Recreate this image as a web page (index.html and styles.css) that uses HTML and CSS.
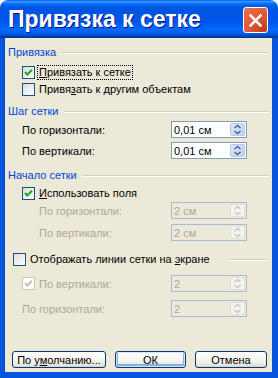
FILE: index.html
```html
<!DOCTYPE html>
<html lang="ru">
<head>
  <meta charset="UTF-8">
  <title>Привязка к сетке</title>
  <link rel="stylesheet" href="styles.css">
</head>
<body>

<div class="window">

  <div class="titlebar">
    <span class="title">Привязка к сетке</span>
    <span class="close">
      <svg width="13" height="13" viewBox="0 0 13 13"><path d="M1.5 1.5 L11.5 11.5 M11.5 1.5 L1.5 11.5" stroke="#fff" stroke-width="2.6" stroke-linecap="square"/></svg>
    </span>
  </div>

  <div class="frame">

    <div class="legend r1"><span>Привязка</span><i class="rule"></i></div>

    <div class="row ind1 r2">
      <span class="cb"><svg width="11" height="11" viewBox="0 0 11 11"><path d="M2 5 L4.3 7.5 L9 2.8" fill="none" stroke="#21a121" stroke-width="2"/></svg></span>
      <span class="lbl focus"><u>П</u>ривязать к сетке</span>
    </div>
    <div class="row ind1 r3">
      <span class="cb"></span>
      <span class="lbl">Привя<u>з</u>ать к другим объектам</span>
    </div>

    <div class="legend r4"><span>Шаг сетки</span><i class="rule"></i></div>

    <div class="row ind1 r5">
      <span class="name">По горизонтали:</span>
      <span class="spin"><span class="val">0,01 см</span><span class="arrows"></span></span>
    </div>
    <div class="row ind1 r6">
      <span class="name">По вертикали:</span>
      <span class="spin"><span class="val">0,01 см</span><span class="arrows"></span></span>
    </div>

    <div class="legend r7"><span>Начало сетки</span><i class="rule"></i></div>

    <div class="row ind1 r8">
      <span class="cb"><svg width="11" height="11" viewBox="0 0 11 11"><path d="M2 5 L4.3 7.5 L9 2.8" fill="none" stroke="#21a121" stroke-width="2"/></svg></span>
      <span class="lbl"><u>И</u>спользовать поля</span>
    </div>
    <div class="row ind2 off r9">
      <span class="name">По горизонтали:</span>
      <span class="spin"><span class="val">2 см</span><span class="arrows"></span></span>
    </div>
    <div class="row ind2 off r10">
      <span class="name">По вертикали:</span>
      <span class="spin"><span class="val">2 см</span><span class="arrows"></span></span>
    </div>

    <div class="row ind0 r11">
      <span class="cb"></span>
      <span class="lbl">Отображать линии сетки на <u>э</u>кране</span>
      <i class="rule wide"></i>
    </div>
    <div class="row ind1 off r12">
      <span class="cb"><svg width="11" height="11" viewBox="0 0 11 11"><path d="M2 5 L4.3 7.5 L9 2.8" fill="none" stroke="#c4c2b6" stroke-width="2"/></svg></span>
      <span class="name">По вертикали:</span>
      <span class="spin"><span class="val">2</span><span class="arrows"></span></span>
    </div>
    <div class="row ind1 off r13">
      <span class="name">По горизонтали:</span>
      <span class="spin"><span class="val">2</span><span class="arrows"></span></span>
    </div>

    <div class="buttons">
      <button class="btn wide">По у<u>м</u>олчанию...</button>
      <button class="btn default">ОК</button>
      <button class="btn">Отмена</button>
    </div>

  </div>

</div>

</body>
</html>
```

FILE: styles.css
```css
body {
  margin: 0;
  background: #fff;
  font-family: 'Liberation Sans', Arial, sans-serif;
  font-size: 11px;
  color: #000;
}

.window {
  width: 278px;
  height: 378px;
  display: flex;
  flex-direction: column;
}

.titlebar {
  height: 38px;
  flex: none;
  display: flex;
  align-items: center;
  justify-content: space-between;
  padding: 0 10px 0 8px;
  box-sizing: border-box;
  border-radius: 8px 8px 0 0;
  background: linear-gradient(#0058ee 0%, #3593ff 4%, #288eff 6%, #127dff 8%, #036ffc 10%, #0262ee 14%, #0057e5 20%, #0054e3 24%, #0055eb 56%, #005bf5 66%, #026afe 76%, #0062ef 86%, #0052d6 92%, #0040ab 96%, #003092 100%);
}

.title {
  color: #fff;
  font-weight: bold;
  font-size: 23px;
  text-shadow: 1px 1px #0f1089;
  padding-top: 1px;
}

.close {
  width: 23px;
  height: 24px;
  margin-top: 2px;
  border: 1px solid #fff;
  border-radius: 3px;
  background: radial-gradient(circle at 85% 90%, #c23d1e 0%, #e05532 45%, #ea7552 100%);
  display: flex;
  align-items: center;
  justify-content: center;
}

.frame {
  flex: 1;
  background: #ece9d8;
  border-left: 4px solid #0855dd;
  border-right: 6px solid #0855dd;
  border-bottom: 6px solid #0855dd;
  box-shadow: inset 1px 0 #0a49c4;
  padding: 0 3px 0 4px;
  display: flex;
  flex-direction: column;
}

.legend {
  height: 14px;
  display: flex;
  align-items: center;
  color: #0046d5;
}

.rule {
  flex: 1;
  height: 0;
  border-top: 1px solid #d0d0bf;
  border-bottom: 1px solid #fff;
  margin-left: 5px;
  margin-top: 1px;
}

.rule.wide {
  margin-left: 17px;
  margin-right: 1px;
}

.row {
  height: 17px;
  display: flex;
  align-items: center;
}

.ind0 { padding-left: 5px; }
.ind1 { padding-left: 14px; }
.ind2 { padding-left: 31px; }

.cb {
  width: 11px;
  height: 11px;
  flex: none;
  border: 1px solid #1c5180;
  background: linear-gradient(135deg, #dcdcd7, #fff);
  margin-right: 4px;
}

.cb svg { display: block; }

.off .cb {
  border-color: #cac8bb;
  background: #fff;
}

.lbl {
  padding: 0 1px;
  line-height: 13px;
  margin-left: -1px;
}

.focus { outline: 1px dotted #000; }

.name { flex: 1; }

.off { color: #aca899; }

.spin {
  width: 74px;
  height: 15px;
  flex: none;
  margin-right: 22px;
  border: 1px solid #7f9db9;
  background: #fff;
  display: flex;
  align-items: center;
}

.off .spin {
  border-color: #a9b9cf;
  background: #ece9d8;
}

.val {
  flex: 1;
  padding-left: 2px;
}

.arrows {
  width: 15px;
  height: 13px;
  margin-right: 1px;
  border-radius: 2px;
  border: 1px solid #b8c8f0;
  box-sizing: border-box;
  background:
    url("data:image/svg+xml,%3Csvg xmlns='http://www.w3.org/2000/svg' width='15' height='13'%3E%3Cpath d='M4.5 5 L7.5 2.5 L10.5 5 M4.5 8 L7.5 10.5 L10.5 8' fill='none' stroke='%234d6185' stroke-width='1.4'/%3E%3C/svg%3E") center / 15px 13px no-repeat,
    linear-gradient(135deg, #dfe7fc, #bccdf6);
}

.off .arrows {
  border-color: #e2e0d6;
  background:
    url("data:image/svg+xml,%3Csvg xmlns='http://www.w3.org/2000/svg' width='15' height='13'%3E%3Cpath d='M4.5 5 L7.5 2.5 L10.5 5 M4.5 8 L7.5 10.5 L10.5 8' fill='none' stroke='%23c9c7ba' stroke-width='1.4'/%3E%3C/svg%3E") center / 15px 13px no-repeat,
    #f4f3ee;
}

.r1 { margin-top: 7px; }
.r2 { margin-top: 5px; }
.r3 { margin-top: 0; }
.r4 { margin-top: 6px; }
.r5 { margin-top: 3px; }
.r6 { margin-top: 4px; }
.r7 { margin-top: 9px; }
.r8 { margin-top: 3px; }
.r9 { margin-top: 0; }
.r10 { margin-top: 5px; }
.r11 { margin-top: 10px; }
.r12 { margin-top: 7px; }
.r13 { margin-top: 8px; }

.buttons {
  display: flex;
  gap: 9px;
  margin-top: 34px;
  padding-left: 4px;
}

.btn {
  width: 72px;
  height: 17px;
  padding: 0;
  font-family: inherit;
  font-size: 11px;
  color: #000;
  border: 1px solid #003c74;
  border-radius: 3px;
  background: linear-gradient(#fff, #f4f3ee 60%, #e6e3d6 90%, #d6d0c5);
}

.btn.wide { width: 94px; }

.btn.default {
  width: 71px;
  box-shadow: inset 0 0 0 1px #cee7ff, inset 0 -1px 0 2px #89ade4;
}
```
